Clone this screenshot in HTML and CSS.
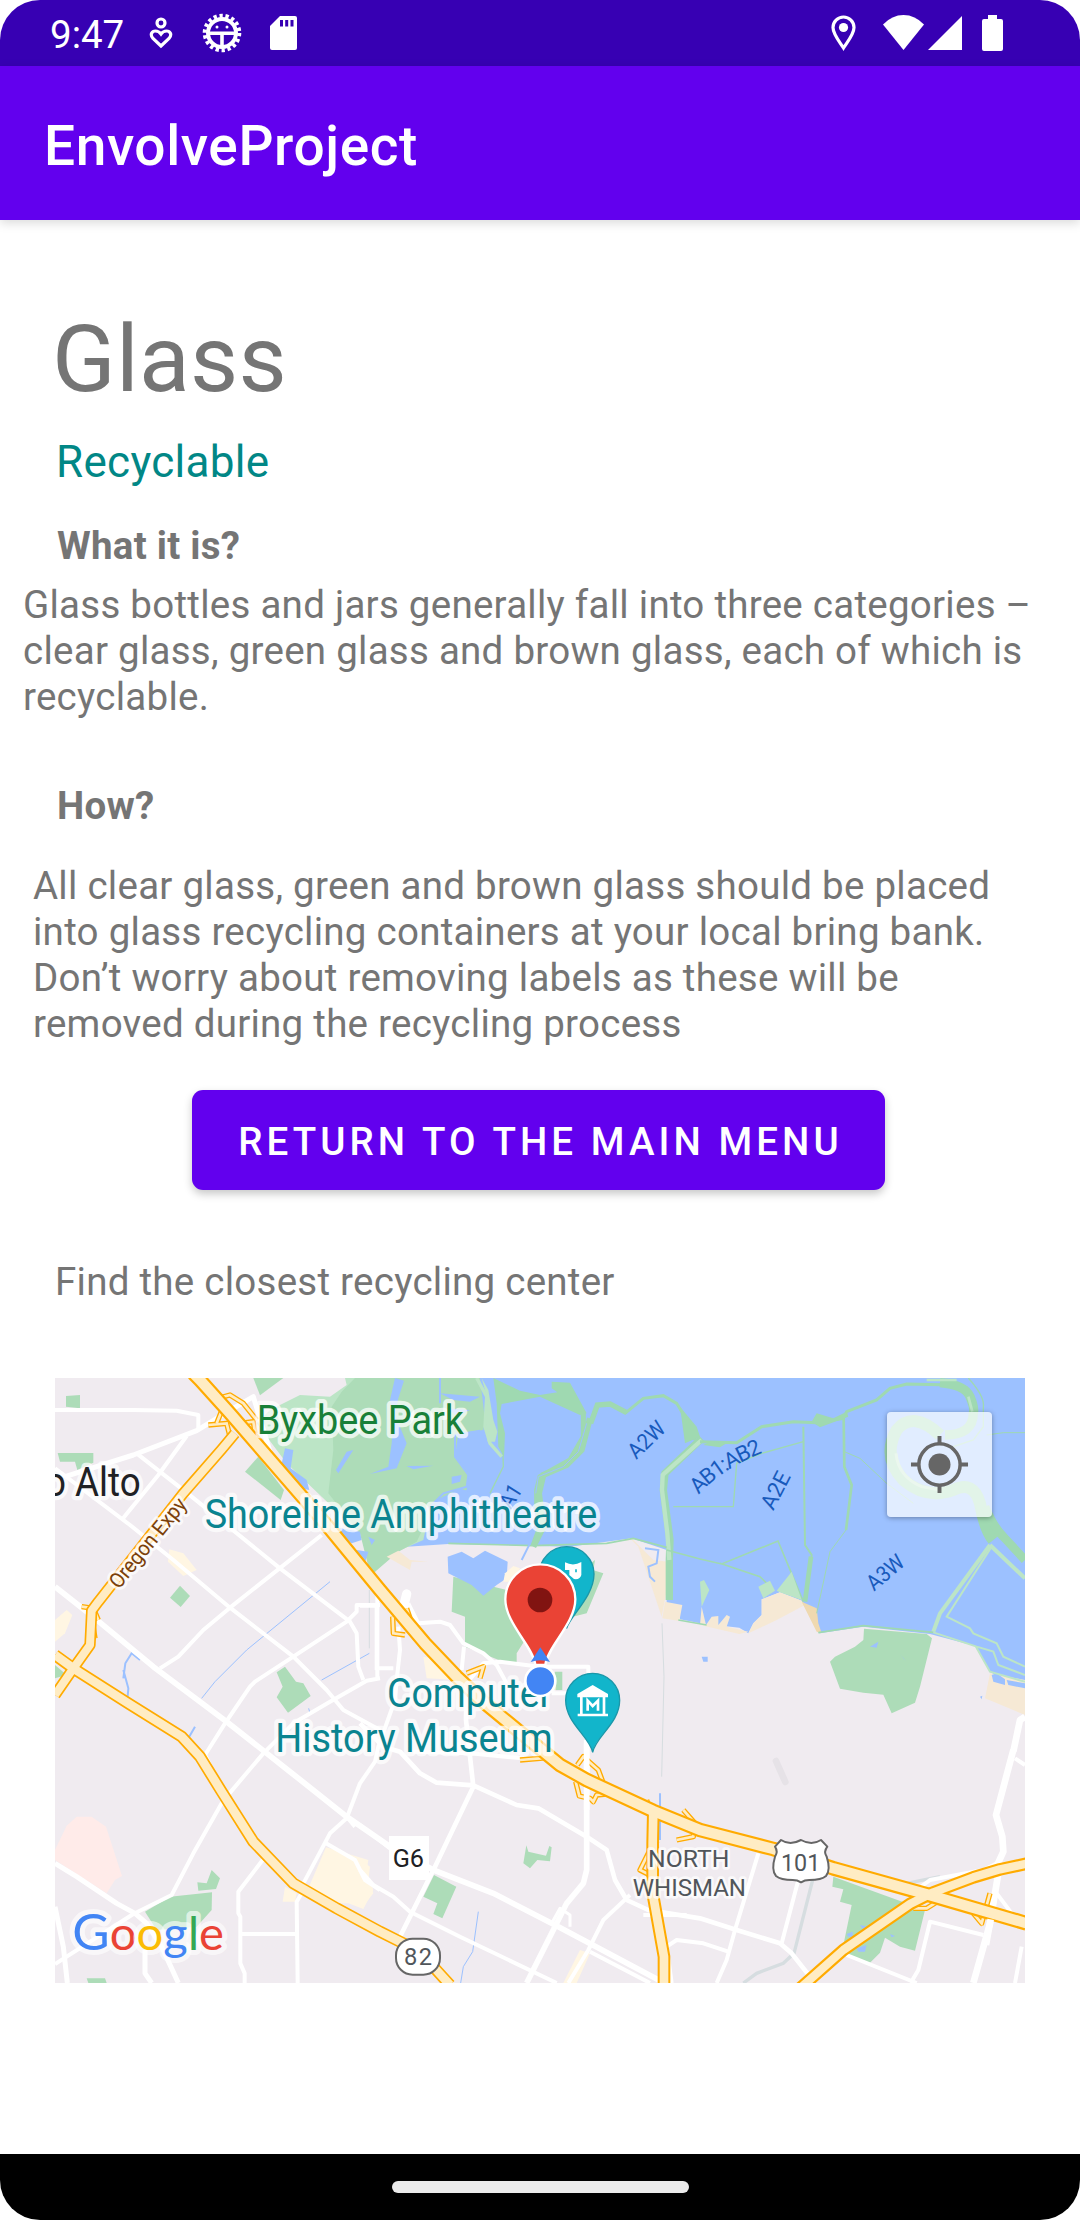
FILE: index.html
```
<!DOCTYPE html>
<html lang="en">
<head>
<meta charset="utf-8">
<title>EnvolveProject</title>
<link rel="stylesheet" href="styles.css">
</head>
<body>
<div class="screen">
  <header class="status">
    <span class="clock">9:47</span>
    <svg class="ic-heart" viewBox="0 0 24 36" fill="none" stroke="#fff" stroke-width="3.2"><circle cx="12" cy="8" r="4"/><path d="M12 31 L4 23.500 C0.500 19.500 3 16 6.500 16 C9 16 10.500 17 12 19 C13.500 17 15 16 17.500 16 C21 16 23.500 19.500 20 23.500 Z"/></svg>
    <svg class="ic-gear" viewBox="0 0 40 40" fill="none" stroke="#fff"><circle cx="20" cy="20" r="17.300" stroke-width="4" stroke-dasharray="3.300 2.735"/><circle cx="20" cy="20" r="14" stroke-width="4"/><path d="M7 20.200H33M20 20V34" stroke-width="3.600"/><circle cx="15" cy="14" r="1.500" fill="#fff" stroke="none"/><circle cx="25" cy="14" r="1.500" fill="#fff" stroke="none"/></svg>
    <svg class="ic-sd" viewBox="0 0 27 34"><path fill="#fff" d="M10 0H25Q27 0 27 2V32Q27 34 25 34H2Q0 34 0 32V10Z"/><path stroke="#3700b3" stroke-width="3" d="M11.500 4V10.500M16.700 4V10.500M22 4V10.500"/></svg>
    <span class="spacer"></span>
    <svg class="ic-place" viewBox="0 0 25 36"><path fill="none" stroke="#fff" stroke-width="3.200" d="M12.500 33 C8 26 2 19 2 12.500 A10.500 10.500 0 0 1 23 12.500 C23 19 17 26 12.500 33Z"/><circle cx="12.500" cy="12.500" r="4.600" fill="#fff"/></svg>
    <svg class="ic-wifi" viewBox="0 0 41 35"><path fill="#fff" d="M0 9.500 Q9 0 20.500 0 T41 9.500 L20.500 35Z"/></svg>
    <svg class="ic-cell" viewBox="0 0 34 34"><path fill="#fff" d="M34 0V34H0Z"/></svg>
    <svg class="ic-batt" viewBox="0 0 21 36"><path fill="#fff" d="M6 0H15V4H19Q21 4 21 6V34Q21 36 19 36H2Q0 36 0 34V6Q0 4 2 4H6Z"/></svg>
  </header>
  <div class="appbar"><h1 class="apptitle">EnvolveProject</h1></div>

  <main class="content">
    <h2 class="name">Glass</h2>
    <p class="kind">Recyclable</p>
    <h3 class="sub what">What it is?</h3>
    <p class="text about">Glass bottles and jars generally fall into three categories –<br>clear glass, green glass and brown glass, each of which is<br>recyclable.</p>
    <h3 class="sub how">How?</h3>
    <p class="text steps">All clear glass, green and brown glass should be placed<br>into glass recycling containers at your local bring bank.<br>Don’t worry about removing labels as these will be<br>removed during the recycling process</p>
    <button class="return">RETURN TO THE MAIN MENU</button>
    <p class="text find">Find the closest recycling center</p>

    <section class="map">
      <svg class="tiles" viewBox="45 54 2910 1815">
        <rect x="45" y="54" width="2910" height="1815" fill="#f0ebf0"/>

        <!-- bay water -->
        <path fill="#9cc1ff" d="M1300 54H2955V1000L2850 935L2805 858L2670 822L2470 800L2338 820L2285 722L2220 697L2165 718V765L2140 790L2125 820L2098 803L1980 790L1920 778V740L1880 730V570L1775 535L1590 560L1225 552L1100 560L1150 300Z"/>
        <!-- Byxbee park and marsh -->
        <path fill="#bce5c6" d="M915 54L920 75L870 110L780 105L690 150L650 190L740 310L960 520L1000 640L1060 580L1150 540L1200 300L1300 54Z"/>
        <path fill="#addcb8" d="M945 54L905 95L875 140L880 270L865 400L960 520L990 640L1000 640L1075 575L1130 545L1190 420L1280 390L1285 340L1245 290L1255 220L1330 210L1335 180L1320 54Z"/>
        <g fill="#addcb8">
          <path d="M640 54H730L660 106Z"/><path d="M655 290L615 335L722 420L732 390Z"/>
          <path d="M78 108L120 105V145L78 140Z"/><path d="M53 279H160V308L112 330L105 305H60Z"/>
          <path d="M420 677L450 708L422 741L390 713Z"/><path d="M45 915L80 945L45 955Z"/>
          <path d="M710 937L735 920L768 965L790 970L812 1008L744 1058L710 1012L728 980Z"/>
          <path d="M1240 650L1400 690L1415 660L1560 600L1690 640L1640 760L1480 800L1430 880V910L1390 905L1275 860V770L1235 755Z"/>
          <path d="M1600 650L1665 600L1640 757H1580Z"/>
          <path d="M2472 806L2660 822L2676 835L2640 980L2625 1028L2555 1060L2530 1004L2470 998L2400 986L2370 905L2385 890L2445 860L2470 840Z"/>
          <path d="M1545 935H1567V990H1535Z"/>
          <path d="M315 1655L390 1610L516 1597L515 1650L470 1700L350 1710Z"/><path d="M472 1567L500 1570L515 1530L540 1555L528 1587L475 1592Z"/>
          <path d="M140 1855H195L200 1869H145Z"/>
          <path d="M1182 1545L1249 1580L1207 1675L1180 1662L1192 1630L1150 1610Z"/>
          <path d="M1459 1456L1465 1475L1518 1487L1528 1458L1535 1462L1530 1504L1492 1500L1470 1525L1450 1510Z"/>
          <path d="M2380 1550L2655 1650L2625 1772L2580 1760L2535 1733L2520 1778L2490 1808L2405 1780L2435 1635L2400 1625L2410 1588L2377 1580Z"/>
        </g>
        <g fill="#9cc1ff">
          <path d="M735 265L760 270L752 325L800 360L808 390L780 385L722 325Z"/><path d="M920 275L940 270L895 340L888 330Z"/>
          <path d="M880 500L960 515L965 540L935 550L905 530Z"/><path d="M950 570L985 575L975 608L920 585Z"/><path d="M985 530L1005 540L995 555Z"/>
          <path d="M1065 54L1092 62L1075 115L1065 165L1100 250L1070 325L990 342L1045 320L1055 250L1060 180L1050 120Z"/>
          <path d="M1223 590L1265 575L1300 595L1335 572L1403 605L1400 655L1370 675L1330 707L1295 675L1225 640Z"/>
          <path d="M1100 318L1180 317L1120 328Z"/><path d="M1235 350L1265 345L1260 365L1235 372Z"/><path d="M1200 100L1320 110L1290 125L1240 120Z"/><path d="M1220 145L1290 150L1250 168Z"/>
          <path d="M1160 540L1210 500L1190 420L1260 385L1350 420L1380 540L1220 550Z"/>
          <path d="M2490 860L2515 845L2510 863Z"/><path d="M2580 882L2598 903L2590 895Z"/><path d="M1985 890H2003V905H1990Z"/>
          <path d="M2420 1722L2438 1715V1730H2425ZM2450 1765L2480 1755L2475 1775H2455ZM2550 1722L2565 1728L2555 1732ZM2460 1695L2485 1700L2470 1710Z"/>
          <path d="M2820 1010L2827 1007L2825 1018Z"/>
        </g>
        <!-- sand, school and hospital blocks -->
        <g fill="#f6e9d5">
          <path d="M1720 545L1775 535L1800 560L1840 600L1885 605L1890 640L1865 770L1835 680L1795 560L1775 540Z"/><path d="M1875 725L1927 735L1918 783L1867 775Z"/>
          <path d="M2165 718L2220 697L2285 722L2295 735L2210 780L2125 820L2140 790L2165 765Z"/>
          <path d="M1980 795L1985 740L1998 795L2015 770L2035 768V795L2060 765L2070 770L2060 800L2125 815L2098 822Z"/>
          <path d="M1040 590L1075 572L1110 600L1165 605L1115 605L1110 630Z"/>
          <path d="M2850 940L2955 960V1065L2835 1015Z"/>
        </g>
        <path fill="#efd9b0" d="M2285 725L2330 745L2335 790L2345 820L2330 815Z"/>
        <g fill="#fff6e3">
          <path d="M388 568L430 580L470 630L430 648L384 605Z"/><path d="M45 780L80 750L97 765L75 820L45 845Z"/>
          <path d="M858 1462L985 1500L980 1530L1000 1590L970 1647L925 1630L890 1630L805 1585Z"/><path d="M735 1580L770 1600L765 1625H728Z"/>
          <path d="M960 1498L990 1520L985 1560L1000 1600L965 1645L945 1580Z"/>
          <path d="M1395 640L1420 618L1440 625L1420 665H1390Z"/><path d="M1150 890L1220 905L1255 960L1160 955Z"/><path d="M1620 1770L1650 1780L1610 1869H1570Z"/>
        </g>
        <path fill="#ffebe9" d="M45 1470L80 1397L110 1370H155L198 1400L246 1548L225 1560L200 1600L45 1500Z"/>
        <path fill="#9cc1ff" d="M2855 945L2870 940L2895 958V975L2860 965ZM2900 960L2955 970V985L2905 975Z"/>
        <path stroke="#e6e2e7" stroke-width="20" stroke-linecap="round" d="M2208 1203L2236 1266"/>

        <!-- levees across the bay -->
        <g fill="none" stroke="#9fd9b1" stroke-width="9">
          <path fill="#9fd9b1" stroke="none" d="M1360 54L1440 92L1500 105L1552 97L1535 85V65L1590 68L1640 160L1620 165L1500 110L1385 132L1380 160L1395 220L1392 290L1375 260L1370 130Z"/>
          <path stroke-width="15" d="M1630 155V230L1590 300L1500 350L1490 390V430L1500 500L1480 555"/>
          <path stroke-width="18" d="M1650 175L1625 270L1580 315L1510 345L1497 400L1510 500L1480 560"/>
          <path stroke="#9cc1ff" stroke-width="3" d="M1640 190L1615 275L1570 320L1495 350L1487 400"/>
          <path stroke-width="16" d="M1652 190L1672 135L1710 132L1760 158"/>
          <path d="M1755 160L1810 115L1870 107L1910 130L1940 180L1965 240"/>
          <path fill="#9fd9b1" stroke="none" d="M1920 140L1970 200L1980 230L1935 250Z"/>
          <path stroke="#9fd9b1" stroke-width="22" d="M1985 235L1875 340L1870 390L1890 540L1888 600V720"/>
          <path stroke="#bce5c6" stroke-width="13" d="M1985 240L1868 345L1866 390L1882 520L1888 600"/>
          <path d="M1980 245L2090 248L2165 200L2260 185L2330 188L2410 175L2420 155L2510 120L2550 85L2600 72L2735 75"/>
          <path fill="#9fd9b1" stroke="none" d="M2315 185L2330 160L2380 175L2420 155L2425 170L2340 202ZM1990 255L2010 245L2060 250L2040 262Z"/>
          <path stroke-width="4" d="M1900 440H2080L2090 310L2165 280L2290 245M1350 400L1390 320L1388 250"/>
          <path stroke-width="6" d="M2290 200L2295 555L2315 585L2295 720"/><path stroke-width="14" d="M2313 590L2295 725"/>
          <path stroke-width="8" d="M2411 175L2413 320L2435 375L2418 510"/><path stroke-width="3" d="M2418 510L2370 575L2330 760M2413 275L2460 295L2540 370L2620 430M2840 225L2890 218H2955"/>
          <path stroke-width="5" d="M1225 550L1480 557L1700 550L1780 535L1880 562M1880 570L1980 597L2045 612L2214 543L2290 725M2040 610L2160 650L2200 690M1915 780L2000 795M2335 818L2470 797L2680 817"/>
          <path stroke-width="28" d="M2700 68Q2775 75 2790 110T2800 160Q2800 225 2715 225"/>
          <path stroke="#bce5c6" stroke-width="8" d="M2785 110L2797 155M2660 60H2750"/>
          <path stroke-width="4" d="M2785 54Q2835 110 2830 140V200L2800 240L2740 260"/>
          <path stroke-width="36" d="M2700 225Q2620 150 2570 210Q2525 290 2590 360Q2660 420 2740 390Q2800 360 2820 430Q2835 510 2860 540"/>
          <path stroke="#bce5c6" stroke-width="9" d="M2568 280Q2575 350 2645 380L2700 390"/>
          <path stroke-width="26" d="M2835 440Q2860 500 2890 530L2955 600"/>
          <path stroke="#bce5c6" stroke-width="12" d="M2850 555L2700 760L2680 815M2850 555L2955 655"/>
          <path stroke="#bce5c6" stroke-width="6" d="M2852 565L2720 770L2790 805L2800 820L2870 850L2890 890L2955 920M2680 817L2810 860L2860 875L2875 915L2955 945M2808 860L2850 935L2955 965"/>
        </g>
        <path fill="#bce5c6" d="M2155 680L2190 662L2205 692L2170 715ZM2210 692L2255 635L2285 720L2220 697ZM1980 665L1992 660L2008 690L1985 740Z"/>
        <path fill="#bce5c6" d="M1325 54L1345 90L1360 180L1372 215L1365 245L1343 245L1335 190L1340 110Z"/>
        <path fill="none" stroke="#bce5c6" stroke-width="10" d="M1310 54L1340 110L1335 200L1350 250L1385 290"/>
        <path fill="none" stroke="#9cc1ff" stroke-width="6" d="M1320 212L1245 225V290L1285 345L1280 380L1210 400L1150 460M1200 54V130M1815 565L1855 570L1850 610L1825 620L1830 650L1845 665M1445 600L1470 550M250 955L256 910L275 880L300 900M250 930L265 985L263 1010M445 1135L465 1100M1860 1300V1440"/>
        <path fill="none" stroke="#9cc1ff" stroke-width="3" d="M870 665L620 870L525 965L485 1015M845 960L988 880M1315 1655L1298 1775L1270 1820L1262 1869M806 1045L810 1060"/>
        <path fill="none" stroke="#d6dde0" stroke-width="3" d="M1866 790L1872 950L1865 1250M988 690V865"/>
        <path fill="none" stroke="#d6dde0" stroke-width="10" d="M2318 1560L2262 1780L2230 1810L2150 1840L2110 1869M2600 1570L2700 1550"/>

        <!-- minor streets -->
        <g fill="none" stroke="#fff" stroke-width="12" stroke-linejoin="round">
          <path d="M45 150H280L410 152L475 165V205"/><path stroke-width="15" d="M75 350L280 285L470 212L555 160L640 110L690 275"/>
          <path d="M45 325L270 495L400 600L570 743L760 890L860 990L910 1050L1020 1110"/>
          <path d="M440 228L355 345L245 480M290 280L455 410L720 625L930 785L950 820L955 920L970 960"/>
          <path d="M845 525L570 743L490 810L415 890L360 925M1020 735H950V755L920 785L760 890L645 965L630 980L555 1090L495 1185L510 1215L525 1250"/>
          <path stroke-width="17" d="M45 680L165 775L340 920L560 1085L750 1235L920 1370L1050 1460L1185 1532L1360 1600L1555 1700L1860 1862"/>
          <path d="M1020 955L980 962L870 1025L760 1090L670 1180L560 1310L545 1330L460 1480L395 1605L280 1662L45 1812M1012 690V960"/>
          <path stroke-width="15" d="M45 1510L110 1550L230 1630L285 1660L320 1690L365 1760L415 1869M45 1640L70 1760L82 1869M315 1770V1840L335 1869"/>
          <path d="M668 1500L595 1595V1660L601 1670V1810L614 1840V1869M605 1722H770M785 1600L770 1625L773 1869"/>
          <path d="M785 1580L870 1420L920 1375L960 1270L1005 1205L1015 1160L1065 1020L1070 960M920 1370L945 1400M858 1450L945 1500L975 1560L1020 1590"/>
          <path stroke-width="14" d="M1280 970L1278 1080L1300 1280L1185 1520L1075 1740M960 1090L1030 1160L1080 1175L1140 1240L1190 1268L1300 1276L1430 1335L1495 1345L1640 1430L1700 1470L1725 1560L1760 1620L1825 1650L1980 1675L2090 1710L2220 1750L2255 1780L2310 1850"/>
          <path d="M1120 1175L1290 1180L1480 1198M960 1530L1000 1575L1060 1610L1110 1655L1260 1730L1550 1869M960 1395L1050 1465"/>
          <path stroke-width="17" d="M1640 1140V1530L1630 1570L1580 1630L1550 1690L1460 1869M1635 960V1010"/>
          <path stroke-width="9" d="M1535 1690L1560 1645L1590 1665V1700"/>
          <path d="M1585 1869L1645 1770L1690 1680L1770 1605M1650 1775L1830 1869M1895 1869L1880 1760L1910 1740L1990 1750L2065 1775M1810 1665L1940 1665"/>
          <path stroke-width="28" stroke-linecap="round" d="M1100 702L1092 735"/><path d="M1105 730L1135 790L1200 785L1230 795L1270 850L1330 880L1370 915L1400 970M1272 860L1265 930M960 737H1010V930M1075 800L1080 870L1070 960M1280 970L1330 910L1380 905L1500 920H1645V1000H1535M1005 925H1060"/>
          <path d="M2155 1480L2085 1710L2060 1800L2030 1869M2275 1560L2225 1750M2420 1785L2630 1869M2612 1869L2635 1830L2670 1685L2830 1725M2945 1760L2925 1869"/>
          <path stroke-width="20" d="M2860 1540L2890 1475L2887 1430L2868 1365L2920 1170M2920 1175L2940 1080L2955 1070M2880 1510L2850 1690L2800 1869"/>
          <path d="M2630 1590L2670 1560L2830 1530L2880 1505M2925 1195L2955 1215M2870 1600L2915 1660"/>
        </g>

        <!-- ramps -->
        <g fill="none" stroke="#ffab00" stroke-width="16" stroke-linejoin="round">
          <path id="ramps" d="M515 120L570 105L610 130L650 180M505 195L560 190L570 230M550 140L530 190M600 190L640 185L645 220M1058 770L1060 820L1095 825M1100 745L1115 790M1280 940L1330 920L1320 955M1440 1200L1500 1195L1540 1190M1612 1215L1630 1190L1675 1230L1690 1270M1607 1265L1618 1308L1650 1315L1660 1325L1670 1305L1720 1300M1820 1320L1835 1365M1830 1370L1850 1450M1930 1350L1965 1390L1960 1430L1910 1440M1845 1440L1800 1530L1830 1545M2620 1645L2660 1645L2700 1620M2800 1660L2825 1690L2850 1600M125 740L160 745L175 780M155 770L165 835"/>
        </g>
        <use href="#ramps" fill="none" class="rampfill"/>
        <path stroke="#fff" stroke-width="17" d="M1640 1150V1240M1640 1290V1350"/>

        <!-- highways: amber casing then cream fill -->
        <g fill="none" stroke-linejoin="round" stroke="#ffab00">
          <path stroke-width="34" d="M585 220L545 268L430 400L175 725L155 752L150 855L100 925L45 1005"/>
          <path stroke-width="36" d="M45 885L100 925L265 1030L425 1130L480 1190L545 1295L640 1445L760 1570L890 1645L1020 1715L1100 1755L1180 1820L1230 1875"/>
          <path stroke-width="38" d="M1840 1355L1838 1450V1600L1872 1790V1875"/>
          <path stroke-width="38" d="M2280 1885L2410 1770L2610 1632L2680 1597L2800 1552L2880 1528L2960 1511"/>
          <path stroke-width="44" d="M460 40L480 60L570 160L860 495L1020 690L1155 850L1250 950L1335 1030L1505 1170L1560 1215L1640 1260L1840 1353L1980 1410L2200 1467L2380 1525L2660 1603L2960 1690"/>
        </g>
        <g fill="none" stroke-linejoin="round" stroke="#ffecc3">
          <path stroke-width="24" d="M585 220L545 268L430 400L175 725L155 752L150 855L100 925L45 1005"/>
          <path stroke-width="26" d="M45 885L100 925L265 1030L425 1130L480 1190L545 1295L640 1445L760 1570L890 1645L1020 1715L1100 1755L1180 1820L1230 1875"/>
          <path stroke-width="26" d="M1840 1355L1838 1450V1600L1872 1790V1875"/>
          <path stroke-width="25" d="M2280 1885L2410 1770L2610 1632L2680 1597L2800 1552L2880 1528L2960 1511"/>
          <path stroke-width="31" d="M460 40L480 60L570 160L860 495L1020 690L1155 850L1250 950L1335 1030L1505 1170L1560 1215L1640 1260L1840 1353L1980 1410L2200 1467L2380 1525L2660 1603L2960 1690"/>
        </g>
        <path stroke="#fff" stroke-width="20" d="M2852 1678L2838 1755"/>

        <!-- labels -->
        <g class="label" font-size="120">
          <text class="bay" font-size="66" textLength="70" lengthAdjust="spacingAndGlyphs" transform="translate(1412 450) rotate(-58)">A1</text>
          <text class="park" x="650" y="221" textLength="622" lengthAdjust="spacingAndGlyphs">Byxbee Park</text>
          <text class="town" x="302" y="408" text-anchor="end" textLength="287" lengthAdjust="spacingAndGlyphs">o Alto</text>
          <text class="poi" x="494" y="504" textLength="1178" lengthAdjust="spacingAndGlyphs">Shoreline Amphitheatre</text>
          <text class="poi" x="1041" y="1040" textLength="496" lengthAdjust="spacingAndGlyphs">Computer</text>
          <text class="poi" x="706" y="1176" textLength="832" lengthAdjust="spacingAndGlyphs">History Museum</text>
          <text class="road" font-size="64" textLength="328" lengthAdjust="spacingAndGlyphs" transform="translate(237 690) rotate(-51)">Oregon Expy</text>
          <text class="area" font-size="74" x="1824" y="1521" textLength="244" lengthAdjust="spacingAndGlyphs">NORTH</text>
          <text class="area" font-size="74" x="1778" y="1608" textLength="340" lengthAdjust="spacingAndGlyphs">WHISMAN</text>
        </g>
        <g class="bay" font-size="66">
          <text transform="translate(1789 300) rotate(-44)" textLength="128" lengthAdjust="spacingAndGlyphs">A2W</text>
          <path id="curve" fill="none" d="M1976 405Q2050 320 2195 268"/>
          <text><textPath href="#curve" textLength="232">AB1:AB2</textPath></text>
          <text transform="translate(2200 454) rotate(-63)" textLength="118" lengthAdjust="spacingAndGlyphs">A2E</text>
          <text transform="translate(2502 695) rotate(-40)" textLength="126" lengthAdjust="spacingAndGlyphs">A3W</text>
        </g>

        <rect x="1047" y="1428" width="120" height="132" fill="#fff"/>
        <text x="1058" y="1522" font-size="77" fill="#202124" textLength="94" lengthAdjust="spacingAndGlyphs">G6</text>
        <rect x="1068" y="1736" width="132" height="108" rx="50" fill="#fff" stroke="#666" stroke-width="6"/>
        <text class="area" x="1092" y="1815" font-size="71" textLength="84">82</text>
        <path fill="#fff" stroke="#666" stroke-width="6" stroke-linejoin="round" d="M2223 1440L2205 1460Q2215 1475 2205 1490Q2193 1530 2208 1548Q2222 1560 2258 1560Q2272 1560 2283 1567Q2294 1560 2308 1560Q2345 1560 2358 1548Q2373 1530 2360 1490Q2350 1475 2362 1460L2343 1440Q2315 1458 2283 1440Q2250 1458 2223 1440Z"/>
        <text class="area" x="2223" y="1532" font-size="71" textLength="118" lengthAdjust="spacingAndGlyphs">101</text>

        <!-- place pins -->
        <g fill="#12b5cb" stroke="#1a97a9" stroke-width="4">
          <path d="M1580 805C1572 770 1498 710 1498 642A82 82 0 0 1 1662 642C1662 710 1588 770 1580 805Z"/>
          <path d="M1658 1177C1650 1130 1577 1090 1577 1021A81 81 0 0 1 1739 1021C1739 1090 1666 1130 1658 1177Z"/>
        </g>
        <path fill="#fff" d="M1575 607Q1600 620 1624 606V645Q1620 660 1602 657L1588 645V630H1575Z"/><path stroke="#12b5cb" stroke-width="5" d="M1608 628V637"/>
        <path fill="#fff" d="M1658 975L1704 1002V1012H1612V1002Z"/>
        <path fill="none" stroke="#fff" stroke-width="8" d="M1624 1010V1063M1692 1010V1063M1613 1065H1704M1643 1052V1022L1658 1038L1674 1022V1052"/>

        <!-- recycling center marker and current position -->
        <path fill="#ea4335" stroke="#fff" stroke-width="7" d="M1486 915C1480 860 1396 790 1396 718A105 105 0 0 1 1606 718C1606 790 1522 860 1516 915Z"/>
        <circle cx="1500" cy="720" r="37" fill="#811411"/>
        <path fill="#4285f4" d="M1501 862L1530 906Q1501 895 1472 906Z"/>
        <circle cx="1501" cy="963" r="45" fill="#4285f4" stroke="#fff" stroke-width="8"/>

        <text class="logo" x="97" y="1769" font-size="140" textLength="455" lengthAdjust="spacingAndGlyphs"><tspan font-size="152" fill="#4285f4">G</tspan><tspan fill="#ea4335">o</tspan><tspan fill="#fbbc04">o</tspan><tspan fill="#4285f4">g</tspan><tspan fill="#34a853">l</tspan><tspan fill="#ea4335">e</tspan></text>
      </svg>
      <button class="locate" aria-label="My location"><svg viewBox="0 0 60 60" fill="none" stroke="#666"><circle cx="30" cy="30" r="21" stroke-width="3.600"/><circle cx="30" cy="30" r="11.200" fill="#666" stroke="none"/><path stroke-width="4" d="M30 1V10M30 50V59M1 30H10M50 30H59"/></svg></button>
    </section>
  </main>
  <footer class="nav"><span class="pill"></span></footer>
</div>
</body>
</html>
```
FILE: styles.css
```
* { box-sizing: border-box; }
body { margin: 0; background: #fff; font-family: Roboto, "Liberation Sans", sans-serif; }
h1, h2, h3, p { margin: 0; font-weight: 400; }
.screen { width: 1080px; height: 2220px; display: flex; flex-direction: column; border-radius: 40px; overflow: hidden; background: #fff; }

.status { flex: none; height: 66px; background: #3700b3; display: flex; align-items: flex-start; padding: 15px 77px 0 50px; color: #fff; }
.status svg { flex: none; }
.clock { width: 75px; font-size: 38.5px; line-height: 46px; margin-top: -3px; white-space: nowrap; }
.ic-heart { width: 24px; height: 36px; margin-left: 24px; }
.ic-gear { width: 40px; height: 40px; margin: -2px 0 0 29px; }
.ic-sd { width: 27px; height: 34px; margin: 1px 0 0 28px; }
.spacer { flex: 1; }
.ic-place { width: 25px; height: 36px; margin-right: 27px; }
.ic-wifi { width: 41px; height: 35px; margin-right: 4px; }
.ic-cell { width: 34px; height: 34px; margin: 1px 20px 0 0; }
.ic-batt { width: 21px; height: 36px; }

.appbar { flex: none; height: 154px; background: #6200ee; padding: 47px 44px 0; box-shadow: 0 3px 10px rgba(0, 0, 0, .15); }
.apptitle { color: #fff; font-size: 55px; font-weight: 500; line-height: 66px; letter-spacing: .6px; }

.content { flex: 1; display: flex; flex-direction: column; align-items: flex-start; color: #757575; letter-spacing: .0162em; }
.name { font-size: 93.5px; line-height: 110px; margin: 84px 0 0 52px; }
.kind { font-size: 44px; line-height: 52px; margin: 22px 0 0 56px; color: #018786; letter-spacing: .3px; }
.sub { font-size: 38.5px; line-height: 46px; font-weight: 700; margin-left: 57px; }
.what { margin-top: 35px; }
.how { margin-top: 63px; }
.text { font-size: 38.5px; line-height: 46px; white-space: nowrap; }
.about { margin: 13px 0 0 23px; }
.steps { margin: 34px 0 0 33px; }
.return { width: 693px; height: 100px; margin: 43px 0 0 192px; padding: 3px 0 0 4px; border: 0; border-radius: 11px; background: #6200ee; color: #fff; font: 500 38.5px/46px Roboto, sans-serif; letter-spacing: 4.08px; white-space: nowrap; box-shadow: 0 4px 8px rgba(0, 0, 0, .22); }
.find { margin: 69px 0 0 55px; }

.map { position: relative; width: 970px; height: 605px; margin: 73px 0 0 55px; letter-spacing: 0; overflow: hidden; }
.tiles { display: block; width: 970px; height: 605px; }
.label text { paint-order: stroke; stroke: #fff; stroke-opacity: .72; stroke-width: 26px; stroke-linejoin: round; }
.label .road { fill: #7a3f0a; stroke-width: 18px; }
.label .bay { stroke: none; }
.label .area { stroke-width: 16px; }
.park { fill: #188038; }
.town { fill: #202124; }
.poi { fill: #0a8490; }
.bay { fill: #185abc; }
.area { fill: #51565b; }
.rampfill { stroke: #ffecc3; stroke-width: 8px; }
.label ~ .logo, .logo { font-family: Lato, sans-serif; paint-order: stroke; stroke: #fff; stroke-opacity: .6; stroke-width: 30px; stroke-linejoin: round; }
.locate { position: absolute; left: 832px; top: 34px; width: 105px; height: 105px; padding: 23px; border: 0; border-radius: 4px; background: rgba(255, 255, 255, .7); box-shadow: 0 1px 5px rgba(0, 0, 0, .35); }
.locate svg { display: block; width: 59px; height: 59px; }

.nav { flex: none; height: 66px; background: #000; display: flex; justify-content: center; padding-top: 27px; }
.pill { width: 297px; height: 12px; border-radius: 6px; background: #ebebeb; }
```
